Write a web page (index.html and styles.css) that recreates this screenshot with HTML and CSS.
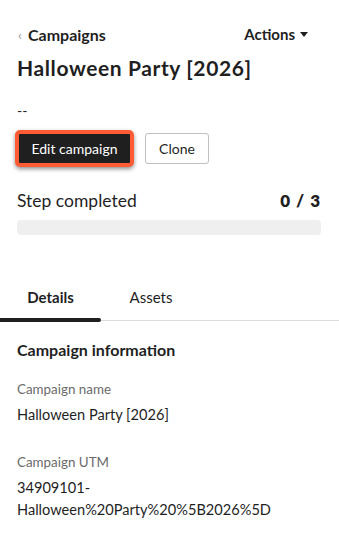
FILE: index.html
```html
<!DOCTYPE html>
<html>
<head>
<meta charset="utf-8">
<link rel="stylesheet" href="styles.css">
</head>
<body>
<div class="page">
  <div class="topbar">
    <a class="crumb"><span class="chev">‹</span><span class="crumb-text">Campaigns</span></a>
    <a class="actions">Actions <svg class="caret" width="8" height="5" viewBox="0 0 8 5"><path d="M0 0H8L4 5Z" fill="#1f1f1f"/></svg></a>
  </div>
  <h1 class="title">Halloween Party [2026]</h1>
  <div class="desc">--</div>
  <div class="buttons">
    <button class="btn btn-primary">Edit campaign</button>
    <button class="btn btn-secondary">Clone</button>
  </div>
  <div class="progress-head">
    <span class="progress-label">Step completed</span>
    <span class="progress-count">0 / 3</span>
  </div>
  <div class="progress-bar"></div>
</div>
<div class="tabs">
  <div class="tab tab-active">Details</div>
  <div class="tab">Assets</div>
</div>
<div class="page section">
  <h2 class="section-title">Campaign information</h2>
  <div class="field">
    <div class="field-label">Campaign name</div>
    <div class="field-value">Halloween Party [2026]</div>
  </div>
  <div class="field">
    <div class="field-label">Campaign UTM</div>
    <div class="field-value">34909101-<br>Halloween%20Party%20%5B2026%5D</div>
  </div>
</div>
</body>
</html>
```
FILE: styles.css
```css
* { box-sizing: border-box; }
body {
  margin: 0;
  background: #fff;
  font-family: "Lato", "Liberation Sans", sans-serif;
  color: #1f1f1f;
}
.page { padding: 0 18px 0 17px; }
.topbar {
  display: flex;
  justify-content: space-between;
  align-items: center;
  margin-top: 24px;
  height: 20px;
}
.crumb { display: flex; align-items: center; font-weight: 700; font-size: 16px; }
.chev { color: #999; font-size: 14px; margin-left: 1px; margin-right: 6px; font-weight: 400; }
.actions { display: flex; align-items: center; font-weight: 700; font-size: 15px; margin-right: 13px; }
.caret { margin-left: 5px; }
.title { margin: 10px 0 0; font-size: 21px; letter-spacing: 0.6px; font-weight: 700; line-height: 28px; }
.desc { margin-top: 19px; font-size: 14px; line-height: 20px; }
.buttons { display: flex; align-items: center; gap: 11px; margin-top: 9px; }
.btn {
  font-family: inherit;
  font-size: 14px;
  border-radius: 3px;
  padding: 0;
  white-space: nowrap;
  text-align: center;
}
.btn-primary {
  background: #1f1f1f;
  color: #fff;
  border: 4px solid #ff5c35;
  margin-left: -2px;
  box-shadow: 0 2px 4px rgba(0,0,0,0.45);
  width: 119px;
  height: 37px;
  border-radius: 5px;
}
.btn-secondary {
  background: #fff;
  color: #1f1f1f;
  border: 1px solid #c0c0c0;
  width: 64px;
  height: 31px;
}
.progress-head {
  display: flex;
  justify-content: space-between;
  align-items: center;
  margin-top: 21px;
  height: 24px;
}
.progress-label { font-size: 17.5px; }
.progress-count { font-size: 17px; font-weight: 800; letter-spacing: 1px; }
.progress-bar {
  margin-top: 8px;
  height: 15px;
  background: #efefef;
  border-radius: 4px;
}
.tabs {
  display: flex;
  margin-top: 43px;
  border-bottom: 1px solid #dcdcdc;
  height: 43px;
}
.tab {
  font-size: 15px;
  line-height: 24px;
  padding-top: 7px;
  width: 100px;
  text-align: center;
  position: relative;
}
.tab-active { font-weight: 700; width: 101px; }
.tab-active::after {
  content: "";
  position: absolute;
  left: 0;
  right: 0;
  bottom: -2px;
  height: 4px;
  background: #1f1f1f;
  border-radius: 0 2px 2px 0;
}
.section { padding-top: 18px; }
.section-title { margin: 0; font-size: 16px; font-weight: 700; line-height: 22px; }
.field { margin-top: 18px; }
.field + .field { margin-top: 26px; }
.field-label { font-size: 13.4px; color: #6b6b6b; line-height: 20px; }
.field-value { margin-top: 5px; font-size: 14.6px; line-height: 22px; }
```
